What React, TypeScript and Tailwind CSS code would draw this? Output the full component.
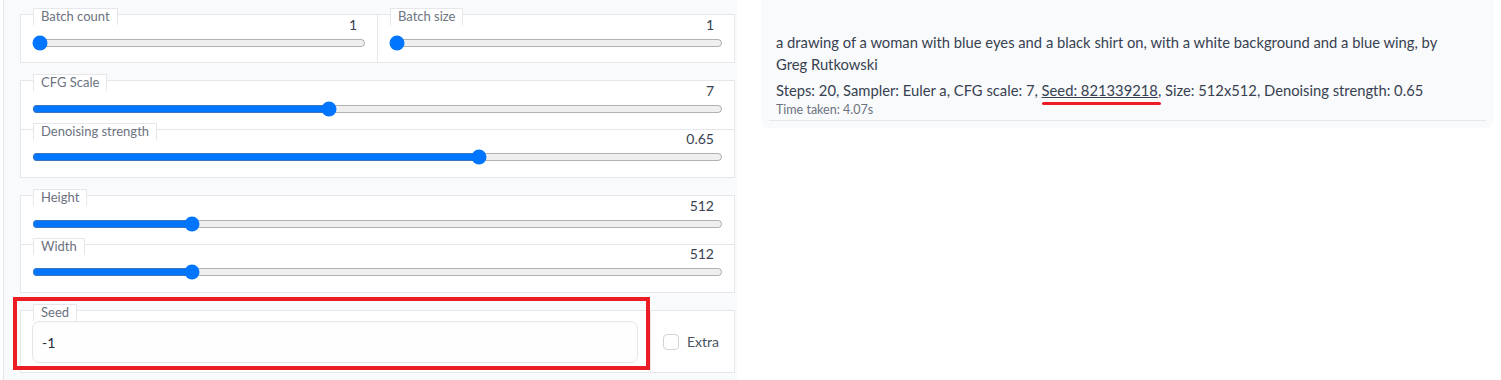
const font = { fontFamily: "Lato, 'Noto Sans', sans-serif" };

const Label = ({ text }: { text: string }) => (
  <span className="absolute left-[12px] top-[-7px] flex h-[17px] items-center border border-b-0 border-[#e5e7eb] bg-white px-[7px] pb-[2px] text-[13px] leading-none text-[#6b7280]">
    {text}
  </span>
);

const Slider = ({
  label,
  value,
  min,
  max,
  step = 1,
  divider = false,
  height = "h-[48px]"
}: {
  label: string;
  value: number;
  min: number;
  max: number;
  step?: number;
  divider?: boolean;
  height?: string;
}) => (
  <div className={`relative px-[11px] ${height} ${divider ? "border-t border-[#e5e7eb]" : ""}`}>
    <Label text={label} />
    <div
      className={`flex items-end justify-end pr-[9px] text-[14px] leading-[16px] text-[#374151] ${
        divider ? "h-[17px]" : "h-[18px]"
      }`}
    >
      {value}
    </div>
    <input
      type="range"
      min={min}
      max={max}
      step={step}
      defaultValue={value}
      className={`h-4 w-full ${divider ? "m-0" : "mx-0 mb-0 -mt-[2px]"}`}
    />
  </div>
);

export default function App() {
  return (
    <div className="flex h-[380px] w-[1501px] bg-white" style={font}>
      <div className="relative ml-[3px] flex w-[734px] flex-col gap-[17px] border-l border-[#e5e7eb] bg-[#f9fafb] pl-[16px] pr-[2px] pt-[14px]">
        <div className="flex border border-[#e5e7eb] bg-white">
          <div className="flex-1 border-r border-[#e5e7eb]">
            <Slider label="Batch count" value={1} min={1} max={100} height="h-[47px]" />
          </div>
          <div className="flex-1">
            <Slider label="Batch size" value={1} min={1} max={8} height="h-[47px]" />
          </div>
        </div>

        <div className="border border-[#e5e7eb] bg-white">
          <Slider label="CFG Scale" value={7} min={1} max={15} step={0.5} />
          <Slider label="Denoising strength" value={0.65} min={0} max={1} step={0.01} divider />
        </div>

        <div className="border border-[#e5e7eb] bg-white">
          <Slider label="Height" value={512} min={64} max={2048} step={64} />
          <Slider label="Width" value={512} min={64} max={2048} step={64} divider />
        </div>

        <div className="flex h-[63px] border border-[#e5e7eb] bg-white">
          <div className="relative flex-1 border-r border-[#e5e7eb] pl-[11px] pr-[12px] pt-[10px]">
            <Label text="Seed" />
            <div className="flex h-[42px] items-center rounded-[7px] border border-[#e5e7eb] bg-[#fefefe] px-[9px] text-[14px] text-[#1f2937] shadow-[inset_0_1px_2px_rgba(0,0,0,0.03)]">
              -1
            </div>
          </div>
          <label className="flex w-[83px] items-center gap-[8px] pl-[12px] text-[14px] text-[#4b5563]">
            <span className="block size-[16px] rounded-[4px] border border-[#d1d5db] bg-white" />
            Extra
          </label>
        </div>

        <div className="pointer-events-none absolute left-[9px] top-[297px] h-[73px] w-[637px] border-4 border-[#ec1c24]" />
      </div>

      <div className="ml-[24px] h-[128px] w-[733px] rounded-b-[8px] bg-[#f9fafb]">
        <div className="mx-[8px] border-b border-[#e5e7eb] pb-[2px] pl-[7px] pr-[22px] pt-[31px] text-[#374151]">
          <p className="text-[14.75px] leading-[22px]">
            a drawing of a woman with blue eyes and a black shirt on, with a white background and a blue wing, by Greg
            Rutkowski
          </p>
          <p className="mt-[4px] text-[14.75px] leading-[22px]">
            Steps: 20, Sampler: Euler a, CFG scale: 7,{" "}
            <span className="relative underline">
              Seed: 821339218
              <span className="absolute bottom-[-6px] left-0 right-[-3px] h-[3px] rounded-full bg-[#ec1c24]" />
            </span>
            , Size: 512x512, Denoising strength: 0.65
          </p>
          <p className="mt-[1px] text-[12.5px] leading-[16px] text-[#6b7280]">Time taken: 4.07s</p>
        </div>
      </div>
    </div>
  );
}
